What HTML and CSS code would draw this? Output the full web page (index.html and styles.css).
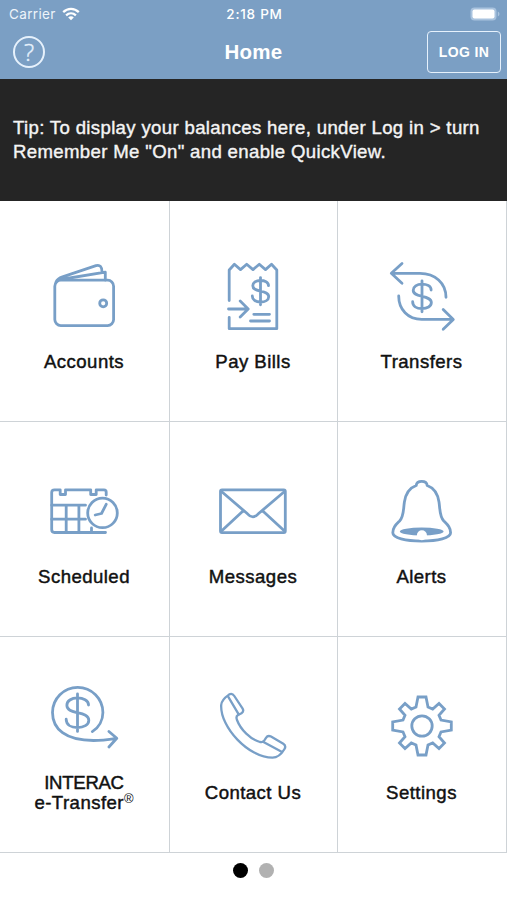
FILE: index.html
```html
<!DOCTYPE html>
<html lang="en">
<head>
  <meta charset="UTF-8">
  <title>Home</title>
  <link rel="stylesheet" href="styles.css">
</head>
<body>
  <svg class="defs" width="0" height="0">
    <defs>
      <g id="dollar">
        <path vector-effect="non-scaling-stroke" d="M8 -5.5C8 -9 4 -10.7 0 -10.7C-4.5 -10.7 -7.7 -8.5 -7.7 -5.4C-7.7 -1.8 -4 -1 0 0C4.5 1 8.2 2 8.2 5.5C8.2 8.8 4.5 10.8 0 10.8C-4.8 10.8 -8.2 8.6 -8.2 4.7M0 -13.6V13.6"/>
      </g>
    </defs>
  </svg>

  <header class="header">
    <div class="status">
      <div class="carrier">
        <span>Carrier</span>
        <svg class="wifi" viewBox="0 0 18 14">
          <path class="arc" d="M1.2 5.2C5.8 .8 12.2 .8 16.8 5.2M4.1 8.3C7 5.6 11 5.6 13.9 8.3"/>
          <path class="dot" d="M9 13.2L6.2 10.4C7.8 9 10.2 9 11.8 10.4Z"/>
        </svg>
      </div>
      <div class="time">2:18 PM</div>
      <svg class="battery" viewBox="0 0 30 14">
        <rect class="shell" x=".5" y=".5" width="26" height="13" rx="4"/>
        <rect class="level" x="2.5" y="2.5" width="22" height="9" rx="2"/>
        <path class="shell" d="M27.8 4.5C30 5.5 30 8.5 27.8 9.5Z"/>
      </svg>
    </div>
    <div class="navbar">
      <button class="help">?</button>
      <h1>Home</h1>
      <button class="login">LOG IN</button>
    </div>
  </header>

  <div class="tip">
    <p>Tip: To display your balances here, under Log in &gt; turn<br>Remember Me "On" and enable QuickView.</p>
  </div>

  <div class="menu">
    <div class="item">
      <svg class="icon" viewBox="0.5 0 80 80">
        <rect x="11.3" y="23.2" width="58.8" height="45.4" rx="6"/>
        <circle cx="59.7" cy="46.3" r="3.5"/>
        <path d="M12.5 25C14 21.5 16 20.8 19 19.8L52.5 8.6C56.5 7.4 58.5 9.8 58.5 14.8M17 22.5L61.8 15.2V23"/>
      </svg>
      <div class="label"><span>Accounts</span></div>
    </div>
    <div class="item">
      <svg class="icon" viewBox="0.5 0 80 80">
        <path d="M16.7 43.5V13L21.9 7.3L28 12.6L34.2 7.3L40.5 12.6L46.8 7.3L53 12.6L59 7.3L64.3 13V71.7H16.7V60.3"/>
        <path d="M16 52H35.5M27.7 44L35.7 52L27.7 59.9M41.3 57.3H57M38 64H57"/>
        <use href="#dollar" x="48" y="34.2"/>
      </svg>
      <div class="label"><span>Pay Bills</span></div>
    </div>
    <div class="item">
      <svg class="icon" viewBox="0 0 80 80">
        <path d="M20 6.5L9.3 16.3L20 26.2M9.5 16.3H38C53 16.3 64 26 64 40.3"/>
        <path d="M16.7 39C16.7 52.5 26 62.4 39.7 62.4H71M61.2 52.5L71.3 62.4L61.2 72.3"/>
        <use href="#dollar" transform="translate(40 39.3) scale(1.14)"/>
      </svg>
      <div class="label"><span>Transfers</span></div>
    </div>
    <div class="item">
      <svg class="icon" viewBox="0.5 1.5 80 80">
        <path d="M62.7 24.5V21.5Q62.7 19.3 60.5 19.3H52.7V24H47.2V19.3H22V24H16.7V19.3H11Q8.2 19.3 8.2 22V59Q8.2 62 11 62H62"/>
        <path d="M8.2 34.7H42M8.2 48.7H42M22.7 34.7V62M35.4 34.7V62M48 57.5V62"/>
        <circle cx="59" cy="42.4" r="14.8"/>
        <path d="M51.7 44.5L58 43L62.7 33.8"/>
      </svg>
      <div class="label"><span>Scheduled</span></div>
    </div>
    <div class="item">
      <svg class="icon" viewBox="0.5 1.5 80 80">
        <rect x="8" y="19.3" width="64.8" height="42.8" rx="1.5"/>
        <path d="M9 21L35 43.3C38.5 47.3 42.3 47.3 45.8 43.3L72 21M9 60.5L30.5 40.5M72 60.5L50.3 40.5"/>
      </svg>
      <div class="label"><span>Messages</span></div>
    </div>
    <div class="item">
      <svg class="icon" viewBox="0 1.5 80 80">
        <path d="M34.2 15C34.8 9.6 44.6 9.6 45.2 15C52.5 17.6 55.7 23 57 31.5C58.2 39.5 57.5 46 61.8 50.5C65.8 54.5 68.6 57 68.6 62.3C68.6 67.5 56 70.6 39.7 70.6C23.4 70.6 10.8 67.5 10.8 62.3C10.8 57 13.6 54.5 17.6 50.5C21.9 46 21.2 39.5 22.4 31.5C23.7 23 26.9 17.6 34.2 15Z"/>
        <ellipse class="fill" cx="39.7" cy="61" rx="21.9" ry="4"/>
        <circle class="clapper" cx="39.9" cy="64.8" r="5"/>
      </svg>
      <div class="label"><span>Alerts</span></div>
    </div>
    <div class="item">
      <svg class="icon" viewBox="0.5 9 80 80">
        <path d="M48.8 52.6C55.5 48.5 59.4 41 59.4 33.5A25.2 25.2 0 0 0 9 33.5C9 50 22 61.5 50 61.5C58 61.5 65 60.5 73 59.3M65.4 52.5L73.3 59.3L65.4 68"/>
        <use href="#dollar" transform="translate(34 33.7) scale(1.38)"/>
      </svg>
      <div class="label"><span><span class="caps">INTERAC</span><br>e-Transfer<sup>®</sup></span></div>
    </div>
    <div class="item">
      <svg class="icon thin" viewBox="0.5 9 80 80">
        <path d="M8.7 26C9 21.5 12.3 18.5 16.5 15.6C18.8 14.2 20.4 14.8 21.8 17L30 29.3C31.3 31.5 30.8 33 29 34.2L25.5 36C23.5 37.2 23.5 38.5 24.5 41C28 50.5 38 60.5 47.5 63C50 63.5 51 63 51.8 61.5L53.5 58.8C54.8 56.8 56.5 56.5 58.5 57.6L70.8 64.8C73 66.2 73.3 67.8 72 70C69 75 65.5 78.7 60 78.7C36 78.7 7.5 48 8.7 26Z"/>
        <path d="M15.5 17.3L26.2 35.3M50.5 62.8L69.6 73"/>
      </svg>
      <div class="label"><span>Contact Us</span></div>
    </div>
    <div class="item">
      <svg class="icon" viewBox="0 9 80 80">
        <path class="gear" d="M36 18H44L46 28L50.7 30L57 24.5L62.5 30L57 36.3L59 41L69.3 43V51L59 53L57 57.7L62.5 64L57 69.5L50.7 64L46 66L44 76H36L34 66L29.3 64L23 69.5L17.5 64L23 57.7L21 53L10.7 51V43L21 41L23 36.3L17.5 30L23 24.5L29.3 30L34 28Z"/>
        <circle cx="40" cy="47" r="10.2"/>
      </svg>
      <div class="label"><span>Settings</span></div>
    </div>
  </div>

  <div class="pager">
    <span class="page active"></span>
    <span class="page"></span>
  </div>
</body>
</html>
```
FILE: styles.css
```css
* {
  box-sizing: border-box;
}
body {
  margin: 0;
  height: 900px;
  background: #fff;
  color: #111;
  font-family: "Liberation Sans", Arial, sans-serif;
  overflow: hidden;
}
.defs {
  display: block;
}
.header {
  height: 79px;
  background: #7b9fc4;
  color: #fff;
}
.status {
  display: grid;
  grid-template-columns: 1fr auto 1fr;
  align-items: center;
  height: 27px;
  padding: 0 7px 0 9px;
  font-size: 13px;
}
.carrier {
  display: flex;
  align-items: center;
  gap: 6px;
  font-family: Inter, sans-serif;
  font-size: 13.5px;
  letter-spacing: 0.35px;
  color: #eef4fa;
}
.wifi {
  width: 18px;
  height: 14px;
}
.wifi .arc {
  fill: none;
  stroke: #fff;
  stroke-width: 2.3;
}
.wifi .dot {
  fill: #fff;
}
.time {
  font-family: Inter, sans-serif;
  font-size: 13.5px;
  font-weight: 500;
  letter-spacing: 0.75px;
}
.battery {
  justify-self: end;
  width: 30px;
  height: 14px;
}
.shell {
  fill: #a9c3de;
}
.level {
  fill: #fff;
}
.navbar {
  display: grid;
  grid-template-columns: 1fr auto 1fr;
  align-items: center;
  height: 50px;
  padding: 0 6px;
}
.navbar h1 {
  margin: 0;
  font-size: 20.5px;
  letter-spacing: 0.2px;
}
.help {
  width: 32px;
  height: 32px;
  margin-left: 7px;
  padding: 0;
  border: 2px solid #e6f1fc;
  border-radius: 50%;
  background: none;
  color: #e6f1fc;
  font-family: "Open Sans", sans-serif;
  font-weight: 300;
  font-size: 24px;
  line-height: 28px;
  -webkit-text-stroke: 0.4px;
}
.login {
  justify-self: end;
  width: 74px;
  height: 42px;
  padding: 0;
  border: 1.5px solid #e6f1fc;
  border-radius: 4px;
  background: none;
  color: #fff;
  font-family: inherit;
  font-size: 14px;
  font-weight: bold;
  letter-spacing: 0.4px;
}
.tip {
  display: flex;
  align-items: center;
  height: 122px;
  padding: 0 13px;
  background: #252525;
  color: #f4f4f4;
}
.tip p {
  margin: 0;
  font-size: 18.6px;
  line-height: 24px;
  letter-spacing: 0.34px;
  white-space: nowrap;
  -webkit-text-stroke: 0.4px;
}
.menu {
  display: grid;
  grid-template-columns: 170px 168px 169px;
  grid-template-rows: 221px 215px 216px;
}
.item {
  display: flex;
  flex-direction: column;
  align-items: center;
  justify-content: flex-end;
  gap: 5px;
  padding: 0 1px 39px 0;
  border-right: 1px solid #ced3d7;
  border-bottom: 1px solid #ced3d7;
}
.icon {
  width: 80px;
  height: 80px;
  fill: none;
  stroke: #789fc7;
  stroke-width: 2.8;
  stroke-linecap: round;
  stroke-linejoin: round;
  overflow: visible;
}
.icon .gear {
  stroke-linejoin: miter;
}
.icon .fill {
  fill: #789fc7;
  stroke: none;
}
.icon .clapper {
  fill: #fff;
  stroke: none;
}
.icon.thin {
  stroke-width: 2.3;
}
.label {
  display: flex;
  align-items: center;
  height: 40px;
  font-size: 18.6px;
  line-height: 20px;
  letter-spacing: 0.45px;
  text-align: center;
  -webkit-text-stroke: 0.45px;
}
.label .caps {
  letter-spacing: -0.3px;
}
.label sup {
  font-size: 13px;
  line-height: 0;
  letter-spacing: 0;
  vertical-align: 6px;
  -webkit-text-stroke: 0;
}
.pager {
  display: flex;
  justify-content: center;
  gap: 11px;
  padding-top: 10px;
}
.page {
  width: 15px;
  height: 15px;
  border-radius: 50%;
  background: #b1b1b1;
}
.page.active {
  background: #000;
}
```
